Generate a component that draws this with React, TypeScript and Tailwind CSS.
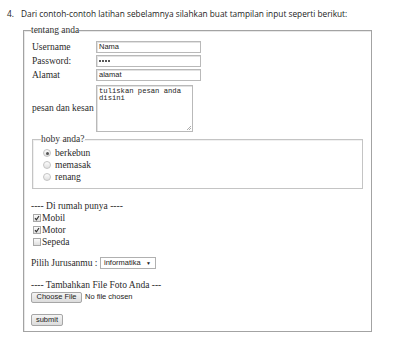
export default function App() {
  const serif = "font-['Liberation_Serif','Times_New_Roman',serif] text-[9.5px] text-[#2a2a2a]";
  const sans = "font-['Liberation_Sans',Arial,sans-serif] text-[7.5px] text-[#222]";
  const boxInput =
    "w-[105px] h-[12px] border border-[#b9b9b9] shadow-[inset_1px_1px_0_#e2e2e2] bg-white flex items-center pl-[2px]";

  const hobbies = [
    { label: "berkebun", checked: true },
    { label: "memasak", checked: false },
    { label: "renang", checked: false },
  ];
  const things = [
    { label: "Mobil", checked: true },
    { label: "Motor", checked: true },
    { label: "Sepeda", checked: false },
  ];

  return (
    <div className="w-[400px] h-[353px] bg-white pt-[8px] overflow-hidden">
      <div className="flex pl-[7px] h-[12px] items-center font-['Open_Sans','Liberation_Sans',sans-serif] text-[8.3px] text-[#222]">
        <span className="w-[14px]">4.</span>
        <span>Dari contoh-contoh latihan sebelamnya silahkan buat tampilan input seperti berikut:</span>
      </div>

      <fieldset className="ml-[23px] mt-[5px] w-[349px] border border-[#a3a3a3] shadow-[inset_1px_1px_0_#e8e8e8] pl-[8px] pr-[8px] pt-[5px] pb-[5px] m-0">
        <legend className={`${serif} px-0 ml-[-1px] leading-[10px] text-[#333]`}>tentang anda</legend>

        <div className={`flex items-center h-[14px] ${serif}`}>
          <span className="w-[64px]">Username</span>
          <div className={boxInput}>
            <span className={sans}>Nama</span>
          </div>
        </div>
        <div className={`flex items-center h-[14px] ${serif}`}>
          <span className="w-[64px]">Password:</span>
          <div className={boxInput}>
            <span className="flex gap-[1px]">
              {[0, 1, 2, 3].map((i) => (
                <span key={i} className="w-[2px] h-[2px] rounded-full bg-[#222]" />
              ))}
            </span>
          </div>
        </div>
        <div className={`flex items-center h-[14px] ${serif}`}>
          <span className="w-[64px]">Alamat</span>
          <div className={boxInput}>
            <span className={sans}>alamat</span>
          </div>
        </div>
        <div className={`flex items-center h-[48px] mt-[2px] ${serif}`}>
          <span className="w-[64px] whitespace-nowrap">pesan dan kesan</span>
          <div className="relative w-[97px] h-[47px] border border-[#b9b9b9] shadow-[inset_1px_1px_0_#e2e2e2] bg-white pl-[2px] pt-[2px]">
            <div className="font-['Liberation_Mono','Courier_New',monospace] text-[7.2px] leading-[7.5px] text-[#222] w-[90px]">
              tuliskan pesan anda disini
            </div>
            <svg className="absolute right-[1px] bottom-[1px]" width="5" height="5" viewBox="0 0 5 5">
              <path d="M1 5 L5 1 M3 5 L5 3" stroke="#999" strokeWidth="0.8" />
            </svg>
          </div>
        </div>

        <fieldset className="mt-[2px] w-[331px] border border-[#c4c4c4] shadow-[inset_1px_1px_0_#f0f0f0] pl-[8px] pr-[8px] pt-[3px] pb-[5px] m-0">
          <legend className={`${serif} px-0 leading-[10px] text-[#333]`}>hoby anda?</legend>
          {hobbies.map((h) => (
            <div key={h.label} className={`flex items-center h-[12px] ${serif}`}>
              <span className="ml-[2px] w-[8px] h-[8px] rounded-full border border-[#c4c4c4] bg-gradient-to-b from-[#fdfdfd] to-[#e0e0e0] flex items-center justify-center">
                {h.checked && <span className="w-[3px] h-[3px] rounded-full bg-[#555]" />}
              </span>
              <span className="ml-[4px]">{h.label}</span>
            </div>
          ))}
        </fieldset>

        <div className={`mt-[11px] ml-[-1px] h-[12px] flex items-center ${serif}`}>
          ---- Di rumah punya ----
        </div>
        {things.map((t) => (
          <div key={t.label} className={`flex items-center h-[12px] ${serif}`}>
            <span className="ml-[1px] w-[8px] h-[8px] border border-[#a8a8a8] bg-gradient-to-b from-[#fbfbfb] to-[#dedede] flex items-center justify-center">
              {t.checked && (
                <svg width="6" height="6" viewBox="0 0 6 6">
                  <path d="M1 3.2 L2.4 4.8 L5 1" fill="none" stroke="#333" strokeWidth="1.2" />
                </svg>
              )}
            </span>
            <span className="ml-[1px]">{t.label}</span>
          </div>
        ))}

        <div className={`mt-[8px] ml-[-1px] flex items-center h-[14px] ${serif}`}>
          <span className="w-[69px] whitespace-nowrap">Pilih Jurusanmu :</span>
          <div className="w-[56px] h-[12px] border border-[#b0b0b0] bg-white flex items-center justify-between pl-[3px] pr-[4px]">
            <span className={sans}>informatika</span>
            <span className="text-[5px] text-[#222] leading-none">▼</span>
          </div>
        </div>

        <div className={`mt-[9px] ml-[-1px] h-[12px] flex items-center ${serif}`}>
          ---- Tambahkan File Foto Anda ---
        </div>
        <div className="ml-[-1px] h-[12px] flex items-center">
          <div className={`w-[51px] h-[11px] border border-[#a6a6a6] rounded-[2px] bg-gradient-to-b from-[#f4f4f4] to-[#dcdcdc] flex items-center justify-center ${sans}`}>
            Choose File
          </div>
          <span className={`ml-[3px] ${sans}`}>No file chosen</span>
        </div>

        <div className="mt-[11px] ml-[-1px] h-[12px] flex items-center">
          <div className={`w-[32px] h-[12px] border border-[#a6a6a6] rounded-[2px] bg-gradient-to-b from-[#f4f4f4] to-[#dcdcdc] flex items-center justify-center ${sans}`}>
            submit
          </div>
        </div>
      </fieldset>
    </div>
  );
}
